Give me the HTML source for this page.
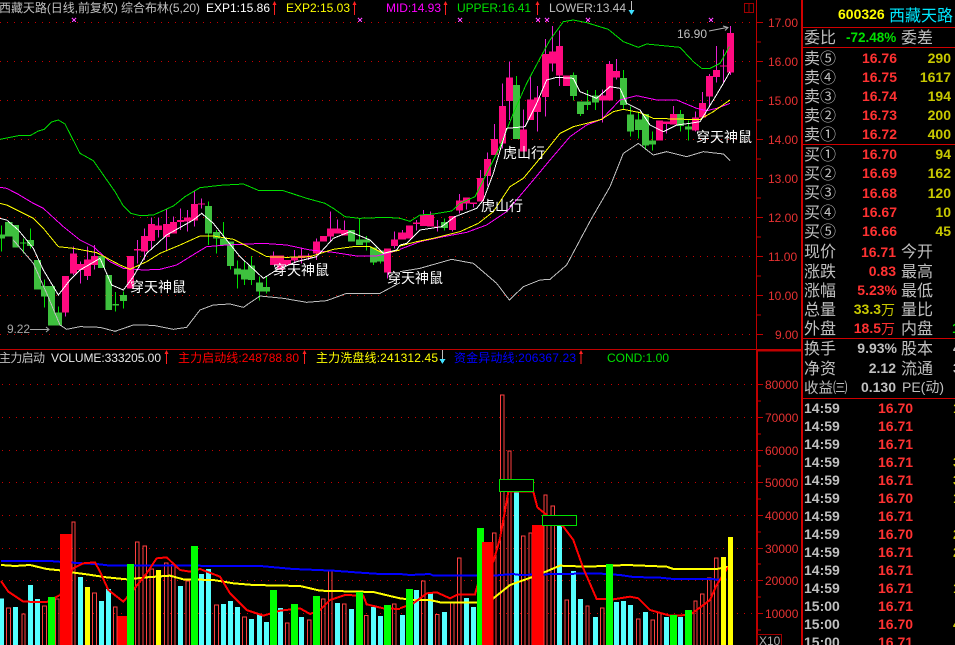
<!DOCTYPE html>
<html>
<head>
<meta charset="utf-8">
<style>
html,body{margin:0;padding:0;background:#000;width:955px;height:645px;overflow:hidden}
svg{display:block}
text{font-family:"Liberation Sans","Noto Sans CJK SC",sans-serif;font-size:12px;fill:#c0c0c0}
.ax{fill:#e83232}
.lb{font-size:16px;fill:#c0c0c0}
.b{font-size:14px;font-weight:bold}
.r{fill:#ff3232;text-anchor:end}
.y{fill:#c8c800;text-anchor:end}
.g{fill:#c0c0c0;text-anchor:end}
.t{fill:#c0c0c0}
.p{fill:#ff3232}
.a{font-size:14px;fill:#fff}
</style>
</head>
<body>
<svg width="955" height="645" viewBox="0 0 955 645" xmlns="http://www.w3.org/2000/svg">
<rect width="955" height="645" fill="#000"/>

<!-- dotted grid -->
<g stroke="#c80000" stroke-width="1" stroke-dasharray="1 6" shape-rendering="crispEdges">
<path d="M0 22.5H757M0 61.5H757M0 100.5H757M0 139.5H757M0 178.5H757M0 217.5H757M0 256.5H757M0 295.5H757M0 334.5H757"/>
<path d="M2 384.5H757M2 417.5H757M2 450.5H757M2 482.5H757M2 515.5H757M2 548.5H757M2 580.5H757M2 613.5H757"/>
</g>

<!-- upper chart left part -->
<g transform="scale(.33333)" shape-rendering="crispEdges">
<path fill="none" stroke="#00e000" stroke-width="3" d="M4 676V755M70 715V760M91 685V745M133 838V922M175 920V940M346 876V935M370 875V925M625 605V735M649 690V760M670 666V735M691 724V808M712 782V866M733 782V855M754 768V855M778 830V902M799 828V880M1078 655V735M1099 708V752M1120 742V795M1141 752V790"/>
<path fill="none" stroke="#e81fd0" stroke-width="3" d="M196 828V950M220 740V825M241 785V850M262 740V840M283 735V808M412 720V790M433 685V780M454 652V750M475 652V712M499 625V750M520 650V700M541 625V690M562 630V695M583 572V680M604 595V625M820 755V795M883 750V790M904 742V790M925 760V780M949 715V780M991 634V725M1012 658V700M1033 662V706M1162 745V835M1183 695V745"/>
<path fill="#3ec03e" d="M0 703H15V716H0zM15 666H37V710H15zM37 675H57V743H37zM60 727H80V731H60zM81 720H102V738H81zM102 780H123V868H102zM123 858H144V890H123zM144 858H165V977H144zM165 938H186V977H165zM294 768H315V804H294zM316 825H336V930H316zM337 912H357V916H337zM360 885H381V903H360zM615 618H636V700H615zM639 696H660V716H639zM660 716H681V735H660zM681 724H702V798H681zM702 805H723V824H702zM723 808H744V838H723zM744 796H765V840H744zM768 847H789V875H768zM789 861H810V874H789zM1044 690H1065V724H1044zM1068 718H1089V735H1068zM1089 718H1110V728H1089zM1110 742H1131V788H1110zM1131 752H1152V785H1131z"/>
<path fill="#ff0a80" d="M186 828H207V938H186zM210 760H231V820H210zM231 792H252V810H231zM252 778H273V828H252zM273 768H294V795H273zM381 768H402V866H381zM402 747H423V752H402zM423 708H444V755H423zM444 672H465V723H444zM465 676H486V690H465zM489 672H510V711H489zM510 666H531V700H510zM531 660H552V666H531zM552 652H573V665H552zM573 612H594V662H573zM594 610H615V614H594zM810 766H831V795H810zM831 766H852V810H831zM852 780H873V795H852zM873 772H894V782H873zM894 766H915V774H894zM915 766H936V772H915zM939 724H960V760H939zM960 708H981V724H960zM981 685H1002V710H981zM1002 685H1023V700H1002zM1023 690H1044V706H1023zM1152 745H1173V818H1152zM1173 718H1194V738H1173zM1194 697H1200V718H1194z"/>
<g fill="none" stroke-width="3">
<polyline stroke="#00e000" points="0,418 30,412 60,406 92,406 115,393 133,388 155,366 175,360 195,372 240,460 280,482 310,525 345,575 370,618 392,640 420,647 460,645 520,618 555,590 600,563 660,556 730,552 775,571 850,572 920,595 975,610 1000,625 1035,650 1078,655 1160,652 1200,655"/>
<polyline stroke="#ff00ff" points="0,562 20,565 55,583 100,610 130,625 190,680 240,720 280,740 330,785 370,805 430,810 480,808 530,795 590,758 620,740 680,735 790,730 860,735 930,750 1000,757 1070,768 1130,768 1200,750"/>
<polyline stroke="#ffff00" points="0,610 20,615 60,635 100,655 130,685 175,740 220,745 290,758 360,795 390,808 440,785 480,760 540,735 600,708 640,708 700,718 740,738 800,770 860,772 930,770 1000,748 1060,740 1110,740 1150,760 1200,750"/>
<polyline stroke="#ffffff" points="0,655 20,660 55,690 100,745 130,810 175,885 210,840 240,810 300,775 335,855 370,870 400,830 440,760 500,705 580,660 605,640 640,670 680,720 720,770 790,835 830,810 890,785 950,770 1000,715 1050,695 1110,720 1150,760 1190,750 1200,735"/>
<polyline stroke="#c0c0c0" points="40,720 100,790 140,880 180,975 200,988 240,980 300,982 345,994 400,975 460,976 520,988 560,982 600,930 640,915 690,912 730,922 780,888 850,895 920,907 980,902 1040,880 1140,880 1200,848"/>
</g>
</g>

<!-- upper chart right part -->
<g transform="translate(400,0) scale(.33333)" shape-rendering="crispEdges">
<path fill="none" stroke="#00e000" stroke-width="3" d="M133 655V692M349 228V417M520 218V302M541 304V348M562 270V330M586 270V330M670 210V330M691 320V410M715 335V415M736 342V450M757 395V452M841 330V395M865 362V422"/>
<path fill="none" stroke="#e81fd0" stroke-width="3" d="M8 690V718M28 676V716M49 660V692M70 630V678M91 635V680M112 660V695M157 648V695M178 582V640M199 592V628M220 607V622M241 510V604M262 458V560M283 372V465M307 250V445M328 185V360M370 328V455M391 228V360M412 258V395M436 117V350M457 78V215M478 92V258M499 226V258M607 268V368M628 183V302M649 177V238M778 361V422M799 372V400M820 318V374M886 335V395M907 276V352M928 222V322M949 138V248M970 148V250M991 78V225"/>
<path fill="#3ec03e" d="M123 666H144V684H123zM339 255H360V417H339zM510 225H531V288H510zM531 304H552V342H531zM552 304H573V315H552zM576 286H597V308H576zM660 234H681V315H660zM681 343H702V395H681zM705 358H726V390H705zM726 342H747V436H726zM747 421H768V433H747zM831 342H852V378H831zM855 380H876V388H855z"/>
<path fill="#ff0a80" d="M0 697H18V718H0zM18 676H39V716H18zM39 667H60V672H39zM60 645H81V678H60zM81 645H102V680H81zM102 680H123V682H102zM147 648H168V690H147zM168 601H189V632H168zM189 592H210V610H189zM210 607H231V612H210zM231 534H252V604H231zM252 477H273V528H252zM273 417H294V465H273zM297 318H318V430H297zM318 232H339V303H318zM360 388H381V455H360zM381 298H402V360H381zM402 292H423V336H402zM426 162H447V291H426zM447 155H468V190H447zM468 138H489V226H468zM489 226H510V258H489zM597 286H618V302H597zM618 192H639V302H618zM639 213H660V232H639zM768 361H789V422H768zM789 365H810V372H789zM810 342H831V374H810zM876 352H897V392H876zM897 309H918V352H897zM918 228H939V290H918zM939 210H960V231H939zM960 196H981V200H960zM981 99H1002V218H981z"/>
<g fill="none" stroke-width="3">
<polyline stroke="#00e000" points="0,655 30,664 60,645 100,642 155,633 180,610 225,590 260,520 300,440 340,340 380,250 420,175 450,120 490,65 520,60 560,68 625,88 670,125 715,142 740,132 840,142 880,185 905,205 930,205 960,190 988,140"/>
<polyline stroke="#ff00ff" points="0,748 60,725 120,712 200,697 260,675 320,635 400,540 450,480 510,410 560,375 605,358 660,300 710,287 770,300 830,300 890,325 920,332 950,325 990,310"/>
<polyline stroke="#ffff00" points="0,738 50,725 100,715 180,695 235,670 280,635 330,560 370,535 420,475 480,400 520,380 560,370 605,358 640,335 670,328 720,338 760,355 860,358 900,358 940,335 990,300"/>
<polyline stroke="#ffffff" points="0,735 20,730 60,690 125,680 165,650 230,625 250,600 280,520 320,385 375,380 410,310 440,240 470,232 520,235 540,275 590,295 630,260 660,265 680,310 720,330 750,375 790,395 830,375 870,370 900,365 940,300 970,250 990,215"/>
<polyline stroke="#c0c0c0" points="0,815 60,805 155,778 220,790 290,850 328,900 370,860 420,840 450,838 500,795 540,720 575,655 630,560 670,460 715,430 760,465 800,455 860,470 910,455 970,462 990,482"/>
</g>
</g>

<!-- magenta x marks -->
<g stroke="#ff40ff" stroke-width="1" shape-rendering="crispEdges">
<path d="M72 18l4 4m0-4l-4 4M358 18l4 4m0-4l-4 4M458 18l4 4m0-4l-4 4M536 18l4 4m0-4l-4 4M545 18l4 4m0-4l-4 4M586 18l4 4m0-4l-4 4M709 18l4 4m0-4l-4 4"/>
</g>

<!-- header upper -->
<text x="-1" y="12" textLength="201" lengthAdjust="spacing">西藏天路(日线,前复权) 综合布林(5,20)</text>
<text x="206" y="12" textLength="64" style="fill:#fff">EXP1:15.86</text>
<text x="286" y="12" textLength="64" style="fill:#ffff00">EXP2:15.03</text>
<text x="386" y="12" textLength="55" style="fill:#ff00ff">MID:14.93</text>
<text x="457" y="12" textLength="74" style="fill:#00e000">UPPER:16.41</text>
<text x="549" y="12" textLength="77" style="fill:#c0c0c0">LOWER:13.44</text>
<g stroke="#ff2020" fill="#ff2020" shape-rendering="crispEdges">
<path d="M274.5 2V15M354.5 2V15M445.5 2V15M537.5 2V15" stroke-width="1"/>
<path d="M274.5 1l-2 4h4zM354.5 1l-2 4h4zM445.5 1l-2 4h4zM537.5 1l-2 4h4z" stroke="none"/>
</g>
<path d="M631.5 1V13" stroke="#c0c0c0" shape-rendering="crispEdges"/>
<path d="M631.5 15l-3-5h6z" fill="#40e0ff"/>
<rect x="744.5" y="3.5" width="9" height="9" fill="none" stroke="#a00000" shape-rendering="crispEdges"/>
<path d="M749 3V13" stroke="#a00000" shape-rendering="crispEdges"/>

<!-- annotations -->
<text class="a" x="130" y="292">穿天神鼠</text>
<text class="a" x="273" y="275">穿天神鼠</text>
<text class="a" x="387" y="283">穿天神鼠</text>
<text class="a" x="696" y="142">穿天神鼠</text>
<text class="a" x="503" y="158">虎山行</text>
<text class="a" x="481" y="211">虎山行</text>
<text x="7" y="333" textLength="23" style="fill:#a8a8a8">9.22</text>
<path d="M30 329.5H48M46 327l3 2.500-3 2.500" fill="none" stroke="#a8a8a8"/>
<text x="677" y="38" textLength="30" style="fill:#c0c0c0">16.90</text>
<path d="M709 31L727 27.500M723 26l5 1.500-3 3" fill="none" stroke="#b0b0b0"/>

<!-- volume, behind lines -->
<g transform="translate(0,345) scale(.33333)" shape-rendering="crispEdges">
<path fill="#55ffff" d="M0 900V760H12V900zM39 900V786H54V900zM84 900V720H99V900zM105 900V762H120V900zM234 900V696H249V900zM297 900V768H312V900zM318 900V732H333V900zM534 900V723H549V900zM597 900V687H612V900zM618 900V672H633V900zM663 900V777H678V900zM684 900V768H699V900zM705 900V786H720V900zM747 900V822H762V900zM771 900V807H786V900zM792 900V831H807V900zM834 900V789H849V900zM897 900V816H912V900zM1005 900V774H1020V900zM1047 900V792H1062V900zM1113 900V786H1128V900zM1134 900V813H1149V900z"/>
<path fill="none" stroke="#ff4040" stroke-width="3" d="M19.500 900V788.500H31.500V900M65.500 900V806.500H75.500V900M127.500 900V782.500H139.500V900M166.500 900V761.500H176.500V900M215.500 900V530.500H225.500V900M277.500 900V743.500H289.500V900M340.500 900V785.500H351.500V900M406.500 900V590.500H417.500V900M428.500 900V602.500H439.500V900M449.500 900V671.500H460.500V900M493.500 900V653.500H504.500V900M514.500 900V658.500H525.500V900M557.500 900V708.500H568.500V900M643.500 900V779.500H655.500V900M727.500 900V815.500H739.500V900M856.500 900V833.500H867.500V900M922.500 900V824.500H933.500V900M964.500 900V761.500H975.500V900M985.500 900V674.500H996.500V900M1027.500 900V776.500H1038.500V900M1093.500 900V811.500H1104.500V900M1177.500 900V776.500H1188.500V900"/>
<g fill="none" stroke-width="6">
<polyline stroke="#0000ff" points="3,648 150,648 200,652 300,658 330,662 540,662 780,663 880,672 1000,677 1080,683 1140,687 1200,687"/>
<polyline stroke="#ffff00" points="3,660 45,663 90,660 140,672 180,676 214,682 260,688 320,697 380,703 440,697 510,692 550,703 640,705 700,715 760,720 900,723 960,737 1120,741 1170,753 1200,760"/>
<polyline stroke="#ff0000" points="3,708 25,740 70,770 140,771 180,750 220,670 250,655 285,652 300,680 325,735 370,770 400,735 440,685 470,640 500,637 540,675 570,680 600,672 660,695 690,745 740,795 790,812 840,797 900,790 930,807 960,795 990,765 1035,750 1090,752 1100,778 1150,790 1200,792"/>
</g>
<path fill="#ff0000" d="M180 900V567H214V900zM353 900V813H387V900z"/>
<path fill="#00ff00" d="M144 900V756H165V900zM381 900V657H402V900zM573 900V603H594V900zM810 900V735H831V900zM873 900V777H894V900zM939 900V753H960V900zM1068 900V741H1089V900zM1152 900V780H1173V900z"/>
<path fill="#ffff00" d="M255 900V726H270V900zM468 900V675H483V900z"/>
</g>
<g transform="translate(400,345) scale(.33333)" shape-rendering="crispEdges">
<path fill="#55ffff" d="M0 900V810H15V900zM42 900V735H57V900zM84 900V742H99V900zM126 900V801H141V900zM192 900V759H207V900zM213 900V786H228V900zM342 900V440H357V900zM471 900V540H486V900zM513 900V678H528V900zM534 900V762H549V900zM579 900V816H594V900zM642 900V771H657V900zM663 900V768H678V900zM684 900V780H699V900zM729 900V801H744V900zM792 900V816H807V900zM834 900V816H849V900z"/>
<path fill="none" stroke="#ff4040" stroke-width="3" d="M64.500 900V707.500H75.500V900M106.500 900V808.500H117.500V900M151.500 900V771.500H162.500V900M172.500 900V638.500H183.500V900M277.500 900V563.500H288.500V900M301.500 900V149.500H312.500V900M323.500 900V317.500H333.500V900M364.500 900V572.500H375.500V900M386.500 900V563.500H396.500V900M431.500 900V449.500H441.500V900M452.500 900V482.500H463.500V900M494.500 900V764.500H505.500V900M557.500 900V782.500H567.500V900M601.500 900V788.500H612.500V900M709.500 900V821.500H720.500V900M752.500 900V824.500H763.500V900M772.500 900V804.500H783.500V900M881.500 900V767.500H891.500V900M901.500 900V746.500H912.500V900M922.500 900V698.500H933.500V900M943.500 900V638.500H954.500V900"/>
<g fill="none" stroke-width="6">
<polyline stroke="#0000ff" points="0,687 30,690 90,687 100,692 280,692 340,687 360,690 430,688 590,685 660,690 700,696 780,698 820,702 980,703"/>
<polyline stroke="#ffff00" points="0,760 40,765 90,765 125,773 230,773 280,760 330,720 400,695 430,683 480,662 560,665 680,660 800,665 820,672 950,672 985,665"/>
<polyline stroke="#ff0000" points="0,790 40,775 80,745 110,742 150,760 175,748 225,748 250,660 280,650 300,580 325,440 400,440 412,487 440,510 490,545 520,585 550,670 590,762 640,763 690,755 715,760 750,795 810,812 870,810 930,765 950,720 985,665"/>
</g>
<path fill="#ff0000" d="M246 900V591H280V900zM396 900V540H430V900z"/>
<path fill="#00ff00" d="M18 900V732H39V900zM231 900V549H252V591H246V900zM618 900V657H639V900zM810 900V810H831V900zM855 900V795H876V900z"/>
<path fill="#ffff00" d="M963 900V636H978V900zM984 900V576H999V900z"/>
<rect x="299" y="404" width="102" height="36" fill="#000" stroke="#00e000" stroke-width="3"/>
<rect x="428" y="512" width="102" height="30" fill="#000" stroke="#00e000" stroke-width="3"/>
</g>

<!-- volume header -->
<text x="-1" y="362" textLength="46" lengthAdjust="spacing">主力启动</text>
<text x="51" y="362" textLength="110" style="fill:#e8e8e8">VOLUME:333205.00</text>
<text x="178" y="362" textLength="121" style="fill:#ff0000">主力启动线:248788.80</text>
<text x="316" y="362" textLength="122" style="fill:#ffff00">主力洗盘线:241312.45</text>
<text x="454" y="362" textLength="122" style="fill:#0000ff">资金异动线:206367.23</text>
<text x="607" y="362" textLength="62" style="fill:#00e000">COND:1.00</text>
<g shape-rendering="crispEdges">
<path d="M166.500 352V364M304.500 352V364M581 352V364" stroke="#ff2020"/>
<path d="M166.500 350l-2 4h4zM304.500 350l-2 4h4zM581 350l-2 4h4z" fill="#ff2020"/>
<path d="M442.500 350V362" stroke="#c0c0c0"/>
<path d="M442.500 364l-3-5h6z" fill="#40e0ff"/>
</g>

<!-- axis -->
<g shape-rendering="crispEdges" stroke="#c00000">
<path d="M756.500 0V349" stroke-width="1"/>
<path d="M757 349V645" stroke-width="2"/>
<path d="M0 349.500H801" stroke-width="1"/>
<path d="M757 350.500H801" stroke-width="2"/>
<path d="M757 22.500H763M757 42H761M757 61.500H763M757 81H761M757 100.500H763M757 120H761M757 139.500H763M757 159H761M757 178.500H763M757 198H761M757 217.500H763M757 237H761M757 256.500H763M757 276H761M757 295.500H763M757 315H761M757 334.500H763" stroke-width="1"/>
<path d="M757 384.500H763M757 401H761M757 417.500H763M757 434H761M757 450.500H763M757 466H761M757 482.500H763M757 499H761M757 515.500H763M757 532H761M757 548.500H763M757 564H761M757 580.500H763M757 597H761M757 613.500H763M757 630H761" stroke-width="1"/>
<path d="M802 0V645" stroke-width="2" stroke="#d00000"/>
</g>
<text class="ax" x="768" y="27">17.00</text>
<text class="ax" x="768" y="66">16.00</text>
<text class="ax" x="768" y="105">15.00</text>
<text class="ax" x="768" y="144">14.00</text>
<text class="ax" x="768" y="183">13.00</text>
<text class="ax" x="768" y="222">12.00</text>
<text class="ax" x="768" y="261">11.00</text>
<text class="ax" x="768" y="300">10.00</text>
<text class="ax" x="775" y="339">9.00</text>
<text class="ax" x="765" y="389">80000</text>
<text class="ax" x="765" y="422">70000</text>
<text class="ax" x="765" y="455">60000</text>
<text class="ax" x="765" y="487">50000</text>
<text class="ax" x="765" y="520">40000</text>
<text class="ax" x="765" y="553">30000</text>
<text class="ax" x="765" y="585">20000</text>
<text class="ax" x="765" y="618">10000</text>
<rect x="757.500" y="634.500" width="24" height="12" fill="#000" stroke="#a00000" shape-rendering="crispEdges"/>
<text x="759" y="645" style="fill:#b0b0b0">X10</text>

<!-- right panel lines -->
<g stroke="#d00000" shape-rendering="crispEdges">
<path d="M802 27.500H955M802 47.500H955M802 144.500H955M802 338.500H955M802 398.500H955"/>
</g>
<text class="b" x="838" y="19" style="fill:#ffff00">600326</text>
<text x="889" y="21" style="font-size:16px;fill:#00e8ff">西藏天路</text>
<text class="lb" x="804" y="43">委比</text>
<text class="b" x="846" y="42" style="fill:#00e000;font-size:13.500px">-72.48%</text>
<text class="lb" x="901" y="43">委差</text>

<text class="lb" x="804" y="64">卖⑤</text><text class="b r" x="897" y="63">16.76</text><text class="b y" x="951" y="63">290</text>
<text class="lb" x="804" y="83">卖④</text><text class="b r" x="897" y="82">16.75</text><text class="b y" x="951" y="82">1617</text>
<text class="lb" x="804" y="102">卖③</text><text class="b r" x="897" y="101">16.74</text><text class="b y" x="951" y="101">194</text>
<text class="lb" x="804" y="121">卖②</text><text class="b r" x="897" y="120">16.73</text><text class="b y" x="951" y="120">200</text>
<text class="lb" x="804" y="140">卖①</text><text class="b r" x="897" y="139">16.72</text><text class="b y" x="951" y="139">400</text>

<text class="lb" x="804" y="160">买①</text><text class="b r" x="897" y="159">16.70</text><text class="b y" x="951" y="159">94</text>
<text class="lb" x="804" y="179">买②</text><text class="b r" x="897" y="178">16.69</text><text class="b y" x="951" y="178">162</text>
<text class="lb" x="804" y="198">买③</text><text class="b r" x="897" y="198">16.68</text><text class="b y" x="951" y="198">120</text>
<text class="lb" x="804" y="218">买④</text><text class="b r" x="897" y="217">16.67</text><text class="b y" x="951" y="217">10</text>
<text class="lb" x="804" y="237">买⑤</text><text class="b r" x="897" y="236">16.66</text><text class="b y" x="951" y="236">45</text>

<text class="lb" x="804" y="257">现价</text><text class="b r" x="896" y="257">16.71</text><text class="lb" x="901" y="257">今开</text>
<text class="lb" x="804" y="277">涨跌</text><text class="b r" x="896" y="276">0.83</text><text class="lb" x="901" y="277">最高</text>
<text class="lb" x="804" y="296">涨幅</text><text class="b r" x="897" y="295">5.23%</text><text class="lb" x="901" y="296">最低</text>
<text class="lb" x="804" y="315">总量</text><text class="b y" x="881" y="314">33.3</text><text x="881" y="315" style="font-size:14px;fill:#c8c800">万</text><text class="lb" x="901" y="315">量比</text>
<text class="lb" x="804" y="334">外盘</text><text class="b r" x="881" y="333">18.5</text><text x="881" y="334" style="font-size:14px;fill:#ff3232">万</text><text class="lb" x="901" y="334">内盘</text>
<text class="b" x="952" y="333" style="fill:#00e000">1</text>

<text class="lb" x="804" y="354">换手</text><text class="b g" x="897" y="353">9.93%</text><text class="lb" x="901" y="354">股本</text><text class="b" x="953" y="353">4</text>
<text class="lb" x="804" y="374">净资</text><text class="b g" x="896" y="373">2.12</text><text class="lb" x="901" y="374">流通</text><text class="b" x="953" y="373">3</text>
<text x="804" y="393" style="font-size:14.500px">收益㈢</text><text class="b g" x="896" y="392">0.130</text><text x="902" y="392" class="b" style="fill:#c0c0c0;font-weight:normal">PE(动)</text>

<g>
<text class="b t" x="804" y="413">14:59</text><text class="b p" x="878" y="413">16.70</text><text class="b" x="953" y="413" style="fill:#c8c800">1</text>
<text class="b t" x="804" y="431">14:59</text><text class="b p" x="878" y="431">16.71</text>
<text class="b t" x="804" y="449">14:59</text><text class="b p" x="878" y="449">16.71</text>
<text class="b t" x="804" y="467">14:59</text><text class="b p" x="878" y="467">16.71</text><text class="b" x="953" y="467" style="fill:#c8c800">3</text>
<text class="b t" x="804" y="485">14:59</text><text class="b p" x="878" y="485">16.71</text><text class="b" x="953" y="485" style="fill:#c8c800">3</text>
<text class="b t" x="804" y="503">14:59</text><text class="b p" x="878" y="503">16.70</text><text class="b" x="953" y="503" style="fill:#c8c800">1</text>
<text class="b t" x="804" y="521">14:59</text><text class="b p" x="878" y="521">16.71</text>
<text class="b t" x="804" y="539">14:59</text><text class="b p" x="878" y="539">16.70</text><text class="b" x="953" y="539" style="fill:#c8c800">2</text>
<text class="b t" x="804" y="557">14:59</text><text class="b p" x="878" y="557">16.71</text><text class="b" x="953" y="557" style="fill:#c8c800">2</text>
<text class="b t" x="804" y="575">14:59</text><text class="b p" x="878" y="575">16.71</text>
<text class="b t" x="804" y="593">14:59</text><text class="b p" x="878" y="593">16.71</text><text class="b" x="953" y="593" style="fill:#c8c800">1</text>
<text class="b t" x="804" y="611">15:00</text><text class="b p" x="878" y="611">16.71</text>
<text class="b t" x="804" y="629">15:00</text><text class="b p" x="878" y="629">16.70</text><text class="b" x="953" y="629" style="fill:#c8c800">4</text>
<text class="b t" x="804" y="647">15:00</text><text class="b p" x="878" y="647">16.71</text>
</g>
</svg>
</body>
</html>
